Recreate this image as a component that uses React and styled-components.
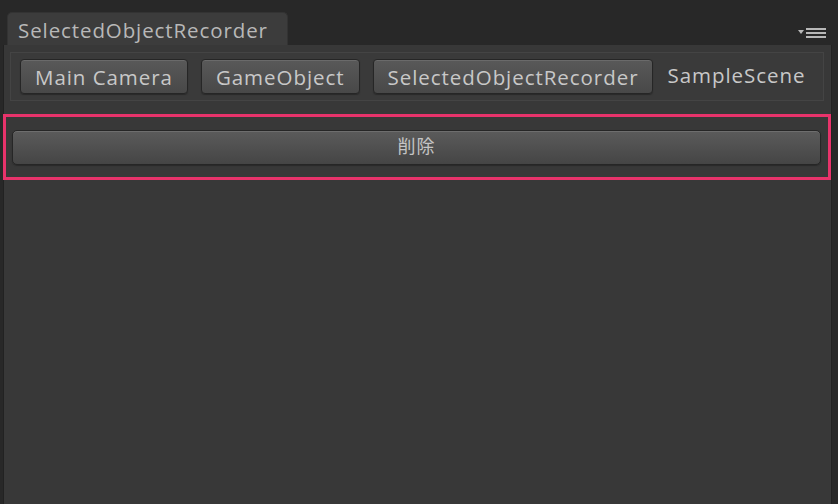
import React from "react";
import styled, { createGlobalStyle } from "styled-components";

const GlobalStyle = createGlobalStyle`
  html, body {
    margin: 0;
    padding: 0;
    background: #282828;
    height: 100%;
    overflow: hidden;
  }
  #root {
    height: 100%;
  }
`;

const Window = styled.div`
  width: 838px;
  height: 504px;
  display: flex;
  flex-direction: column;
  font-family: "Open Sans", "Noto Sans CJK JP", sans-serif;
  color: #c2c2c2;
`;

const TabBar = styled.div`
  height: 45px;
  display: flex;
  align-items: flex-end;
  justify-content: space-between;
  padding: 0 12px 0 7px;
  box-sizing: border-box;
`;

const Tab = styled.div`
  height: 33px;
  width: 281px;
  box-sizing: border-box;
  background: #3c3c3c;
  border: 1px solid #333333;
  border-bottom: none;
  border-radius: 5px 5px 0 0;
  padding: 3px 0 0 10px;
  font-size: 20.5px;
  letter-spacing: 0.9px;
  line-height: 28px;
  color: #b8b8b8;
  white-space: nowrap;
`;

const MenuIcon = styled.svg`
  align-self: flex-start;
  margin-top: 27px;
`;

const Panel = styled.div`
  flex: 1;
  margin: 0 6px 0 3px;
  background: #383838;
  border-left: 1px solid #222222;
  border-right: 1px solid #222222;
  display: flex;
  flex-direction: column;
`;

const Toolbar = styled.div`
  margin: 7px 7px 0 6px;
  height: 49px;
  box-sizing: border-box;
  border: 1px solid #444444;
  background: #3a3a3a;
  display: flex;
  align-items: center;
  gap: 13px;
  padding: 0 9px;
`;

const CrumbButton = styled.div`
  height: 35px;
  box-sizing: border-box;
  padding: 0 14px;
  display: flex;
  align-items: center;
  border-radius: 4px;
  border: 1px solid #262626;
  background: linear-gradient(#595959, #484848);
  box-shadow: inset 0 1px 0 #6a6a6a, 0 1px 1px #2a2a2a;
  font-size: 20.5px;
  letter-spacing: 0.95px;
  color: #c8c8c8;
  white-space: nowrap;
`;

const CrumbLabel = styled.div`
  font-size: 20.5px;
  letter-spacing: 0.95px;
  color: #c8c8c8;
  padding-left: 1px;
  white-space: nowrap;
  margin-top: -4px;
`;

const Highlight = styled.div`
  margin-top: 13px;
  margin-left: -1px;
  height: 66px;
  box-sizing: border-box;
  border: 3px solid #e8336b;
  padding: 13px 7px 0 6px;
`;

const DeleteButton = styled.div`
  height: 35px;
  box-sizing: border-box;
  border-radius: 5px;
  border: 1px solid #262626;
  background: linear-gradient(#5b5b5b, #454545);
  box-shadow: inset 0 1px 0 #6e6e6e, 0 1px 1px #2a2a2a;
  display: flex;
  align-items: center;
  justify-content: center;
  padding-bottom: 6px;
  font-size: 18px;
  letter-spacing: 1px;
  color: #c4c4c4;
`;

export default function App() {
  return (
    <Window>
      <GlobalStyle />
      <TabBar>
        <Tab>SelectedObjectRecorder</Tab>
        <MenuIcon width="28" height="12" viewBox="0 0 28 12">
          <polygon points="0,3 6,3 3,7" fill="#b8b8b8" />
          <rect x="8" y="1" width="20" height="2" fill="#b8b8b8" />
          <rect x="8" y="5" width="20" height="2" fill="#b8b8b8" />
          <rect x="8" y="9" width="20" height="2" fill="#b8b8b8" />
        </MenuIcon>
      </TabBar>
      <Panel>
        <Toolbar>
          <CrumbButton>Main Camera</CrumbButton>
          <CrumbButton>GameObject</CrumbButton>
          <CrumbButton>SelectedObjectRecorder</CrumbButton>
          <CrumbLabel>SampleScene</CrumbLabel>
        </Toolbar>
        <Highlight>
          <DeleteButton>削除</DeleteButton>
        </Highlight>
      </Panel>
    </Window>
  );
}
